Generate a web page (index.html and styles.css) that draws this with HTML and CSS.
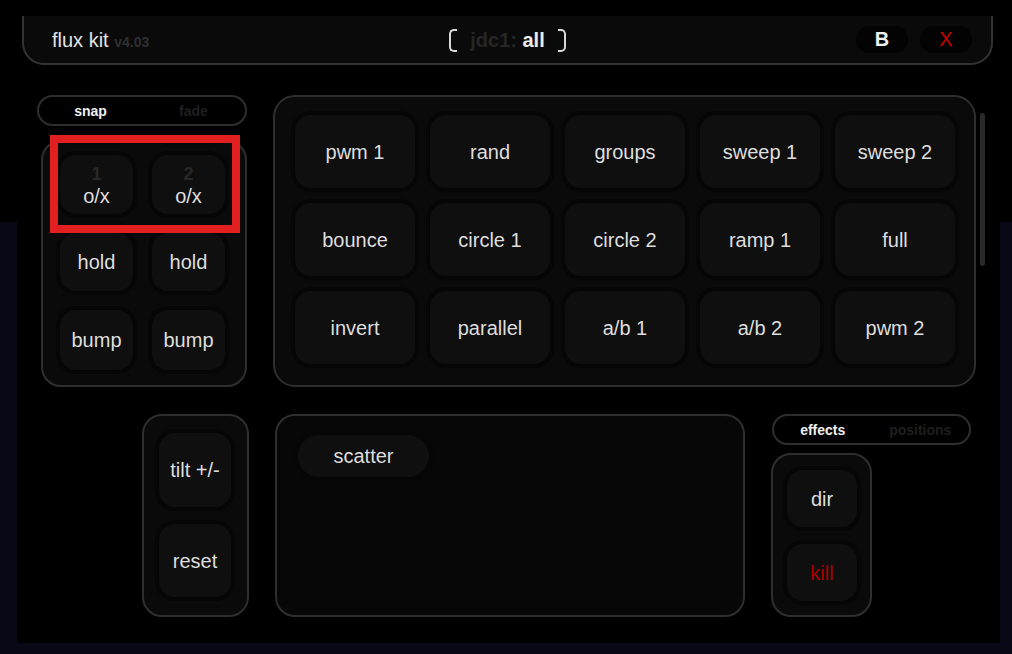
FILE: index.html
```html
<!DOCTYPE html>
<html>
<head>
<meta charset="utf-8">
<link rel="stylesheet" href="styles.css">
</head>
<body>
<div class="app">
  <header class="header">
    <div class="title">flux kit <span class="ver">v4.03</span></div>
    <div class="target">
      <span class="bracket left"></span>
      <span class="target-text"><span class="dim">jdc1:</span> all</span>
      <span class="bracket right"></span>
    </div>
    <div class="head-btns">
      <div class="hbtn">B</div>
      <div class="hbtn red">X</div>
    </div>
  </header>

  <section class="top-row">
    <div class="left-col">
      <div class="toggle">
        <span class="on">snap</span>
        <span class="off">fade</span>
      </div>
      <div class="panel pads">
        <div class="btn"><span class="num">1</span><span>o/x</span></div>
        <div class="btn"><span class="num">2</span><span>o/x</span></div>
        <div class="btn">hold</div>
        <div class="btn">hold</div>
        <div class="btn">bump</div>
        <div class="btn">bump</div>
      </div>
    </div>
    <div class="panel grid-panel">
      <div class="btn">pwm 1</div>
      <div class="btn">rand</div>
      <div class="btn">groups</div>
      <div class="btn">sweep 1</div>
      <div class="btn">sweep 2</div>
      <div class="btn">bounce</div>
      <div class="btn">circle 1</div>
      <div class="btn">circle 2</div>
      <div class="btn">ramp 1</div>
      <div class="btn">full</div>
      <div class="btn">invert</div>
      <div class="btn">parallel</div>
      <div class="btn">a/b 1</div>
      <div class="btn">a/b 2</div>
      <div class="btn">pwm 2</div>
    </div>
    <div class="scrollbar"></div>
  </section>

  <section class="bottom-row">
    <div class="panel tilt">
      <div class="btn">tilt +/-</div>
      <div class="btn">reset</div>
    </div>
    <div class="panel scatter-panel">
      <div class="btn pill">scatter</div>
    </div>
    <div class="right-col">
      <div class="toggle">
        <span class="on">effects</span>
        <span class="off">positions</span>
      </div>
      <div class="panel fx">
        <div class="btn">dir</div>
        <div class="btn kill">kill</div>
      </div>
    </div>
  </section>

  <div class="highlight"></div>
</div>
</body>
</html>
```
FILE: styles.css
```css
* { box-sizing: border-box; }

html, body {
  margin: 0;
  height: 654px;
  overflow: hidden;
}

body {
  background: linear-gradient(#000 0, #000 222px, #090817 222px);
  font-family: "Liberation Sans", Arial, sans-serif;
  color: #e0e0e0;
}

.app {
  position: relative;
  margin-left: 17px;
  width: 983px;
  height: 643px;
  background: #000;
  padding: 16px 0 0 20px;
}

/* header */
.header {
  margin-left: -15px;
  width: 971px;
  height: 49px;
  background: #0a0a0a;
  border: 2px solid #333;
  border-top: none;
  border-radius: 0 0 22px 22px;
  display: grid;
  grid-template-columns: 1fr auto 1fr;
  align-items: center;
  padding: 0 19px;
}

.title {
  font-size: 20px;
  color: #e4e4e4;
  padding: 1px 0 0 9px;
}

.ver {
  font-size: 14px;
  font-weight: bold;
  color: #2f2f2f;
}

.target {
  display: flex;
  align-items: center;
  gap: 13px;
  padding-top: 1px;
}

.target-text {
  font-size: 20px;
  font-weight: bold;
  color: #ececec;
}

.dim { color: #262626; }

.bracket {
  width: 8px;
  height: 23px;
  border: 2px solid #d8d8d8;
}

.bracket.left {
  border-right: none;
  border-radius: 5px 0 0 5px;
}

.bracket.right {
  border-left: none;
  border-radius: 0 5px 5px 0;
}

.head-btns {
  display: flex;
  justify-content: flex-end;
  gap: 12px;
}

.hbtn {
  width: 52px;
  height: 27px;
  border-radius: 14px;
  background: #030303;
  display: flex;
  align-items: center;
  justify-content: center;
  font-size: 20px;
  font-weight: bold;
  color: #eee;
}

.hbtn.red {
  color: #c80000;
  font-weight: normal;
}

/* common */
.panel {
  background: #0a0a0a;
  border: 2px solid #2e2e2e;
  border-radius: 20px;
}

.btn {
  background: #0f0f0f;
  border-radius: 16px;
  box-shadow: 0 0 0 4px #060606;
  display: flex;
  flex-direction: column;
  align-items: center;
  justify-content: center;
  font-size: 20px;
  color: #dedede;
  line-height: 22px;
}

.num {
  font-size: 18px;
  font-weight: bold;
  color: #282828;
}

.toggle {
  height: 31px;
  border: 2px solid #2e2e2e;
  border-radius: 16px;
  display: grid;
  grid-template-columns: 1fr 1fr;
  align-items: center;
  text-align: center;
  font-size: 14px;
  font-weight: bold;
}

.toggle .on { color: #f0f0f0; }
.toggle .off { color: #1f1f1f; }

/* top row */
.top-row {
  display: flex;
  margin-top: 30px;
}

.left-col {
  width: 210px;
  margin-right: 26px;
}

.pads {
  margin: 14px 0 0 4px;
  width: 206px;
  height: 247px;
  display: grid;
  grid-template-columns: 73px 73px;
  grid-template-rows: 59px 58px 60px;
  column-gap: 19px;
  row-gap: 19px;
  padding: 13px 0 0 17px;
}

.grid-panel {
  width: 703px;
  height: 292px;
  border-radius: 22px;
  display: grid;
  grid-template-columns: repeat(5, 120px);
  grid-template-rows: repeat(3, 73px);
  gap: 15px;
  padding: 18px 0 0 20px;
}

.scrollbar {
  margin: 18px 0 0 4px;
  width: 5px;
  height: 153px;
  border-radius: 3px;
  background: #2a2a2a;
}

/* bottom row */
.bottom-row {
  display: flex;
  margin-top: 27px;
}

.tilt {
  margin-left: 105px;
  width: 107px;
  height: 203px;
  display: grid;
  grid-template-columns: 72px;
  grid-template-rows: 74px 73px;
  row-gap: 17px;
  padding: 17px 0 0 15px;
}

.scatter-panel {
  margin-left: 26px;
  width: 470px;
  height: 203px;
  background: #070707;
  padding: 19px 0 0 21px;
}

.btn.pill {
  width: 131px;
  height: 42px;
  border-radius: 21px;
}

.right-col {
  margin-left: 26px;
  width: 200px;
}

.right-col .toggle {
  margin-left: 1px;
  width: 199px;
}

.fx {
  margin-top: 8px;
  width: 101px;
  height: 164px;
  display: grid;
  grid-template-columns: 70px;
  grid-template-rows: 57px 57px;
  row-gap: 17px;
  padding: 15px 0 0 14px;
}

.btn.kill { color: #a80000; }

/* highlight overlay */
.highlight {
  position: absolute;
  left: 33px;
  top: 135px;
  width: 190px;
  height: 98px;
  border: 8px solid #e21f1f;
}
```
